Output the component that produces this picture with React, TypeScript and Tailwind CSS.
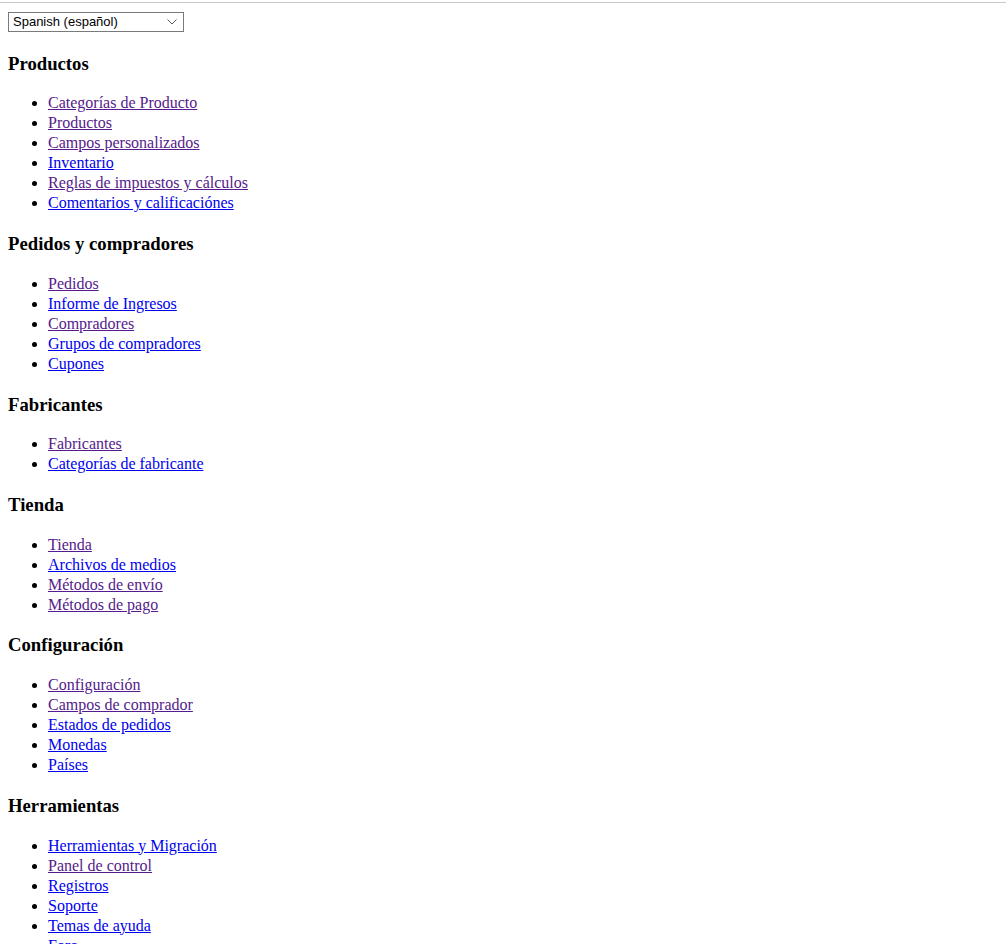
import React from "react";

type Item = { label: string; visited?: boolean };
type Section = { title: string; items: Item[] };

const sections: Section[] = [
  {
    title: "Productos",
    items: [
      { label: "Categorías de Producto", visited: true },
      { label: "Productos", visited: true },
      { label: "Campos personalizados", visited: true },
      { label: "Inventario" },
      { label: "Reglas de impuestos y cálculos", visited: true },
      { label: "Comentarios y calificaciónes" },
    ],
  },
  {
    title: "Pedidos y compradores",
    items: [
      { label: "Pedidos", visited: true },
      { label: "Informe de Ingresos" },
      { label: "Compradores", visited: true },
      { label: "Grupos de compradores" },
      { label: "Cupones" },
    ],
  },
  {
    title: "Fabricantes",
    items: [
      { label: "Fabricantes", visited: true },
      { label: "Categorías de fabricante" },
    ],
  },
  {
    title: "Tienda",
    items: [
      { label: "Tienda", visited: true },
      { label: "Archivos de medios" },
      { label: "Métodos de envío", visited: true },
      { label: "Métodos de pago", visited: true },
    ],
  },
  {
    title: "Configuración",
    items: [
      { label: "Configuración", visited: true },
      { label: "Campos de comprador", visited: true },
      { label: "Estados de pedidos" },
      { label: "Monedas" },
      { label: "Países" },
    ],
  },
  {
    title: "Herramientas",
    items: [
      { label: "Herramientas y Migración" },
      { label: "Panel de control", visited: true },
      { label: "Registros" },
      { label: "Soporte" },
      { label: "Temas de ayuda" },
      { label: "Foro" },
    ],
  },
];

export default function App() {
  return (
    <div className="min-h-screen bg-white text-black font-['Liberation_Serif','Times_New_Roman',serif] text-[16px]">
      <div className="h-[2px]" />
      <div className="h-px bg-[#c8c8c8]" />
      <div className="px-2 pt-[9px]">
        <div className="flex h-[20px] w-[176px] items-center justify-between border border-[#7a7a7a] bg-white pl-[4px] pr-[6px] font-['Liberation_Sans',Arial,sans-serif] text-[13px] text-black">
          <span>Spanish (español)</span>
          <svg width="10" height="6" viewBox="0 0 10 6" fill="none">
            <path d="M0.5 0.5 L5 5 L9.5 0.5" stroke="#555" strokeWidth="1" />
          </svg>
        </div>
        <div className="h-px" />
        {sections.map((s) => (
          <div key={s.title}>
            <h3 className="my-[18.72px] text-[18.72px] font-bold leading-[23px]">{s.title}</h3>
            <ul className="my-4 list-disc pl-10">
              {s.items.map((it) => (
                <li key={it.label} className="leading-[20px]">
                  <a
                    href="#"
                    className={
                      it.visited
                        ? "text-[#551a8b] underline"
                        : "text-[#0000ee] underline"
                    }
                  >
                    {it.label}
                  </a>
                </li>
              ))}
            </ul>
          </div>
        ))}
      </div>
    </div>
  );
}
